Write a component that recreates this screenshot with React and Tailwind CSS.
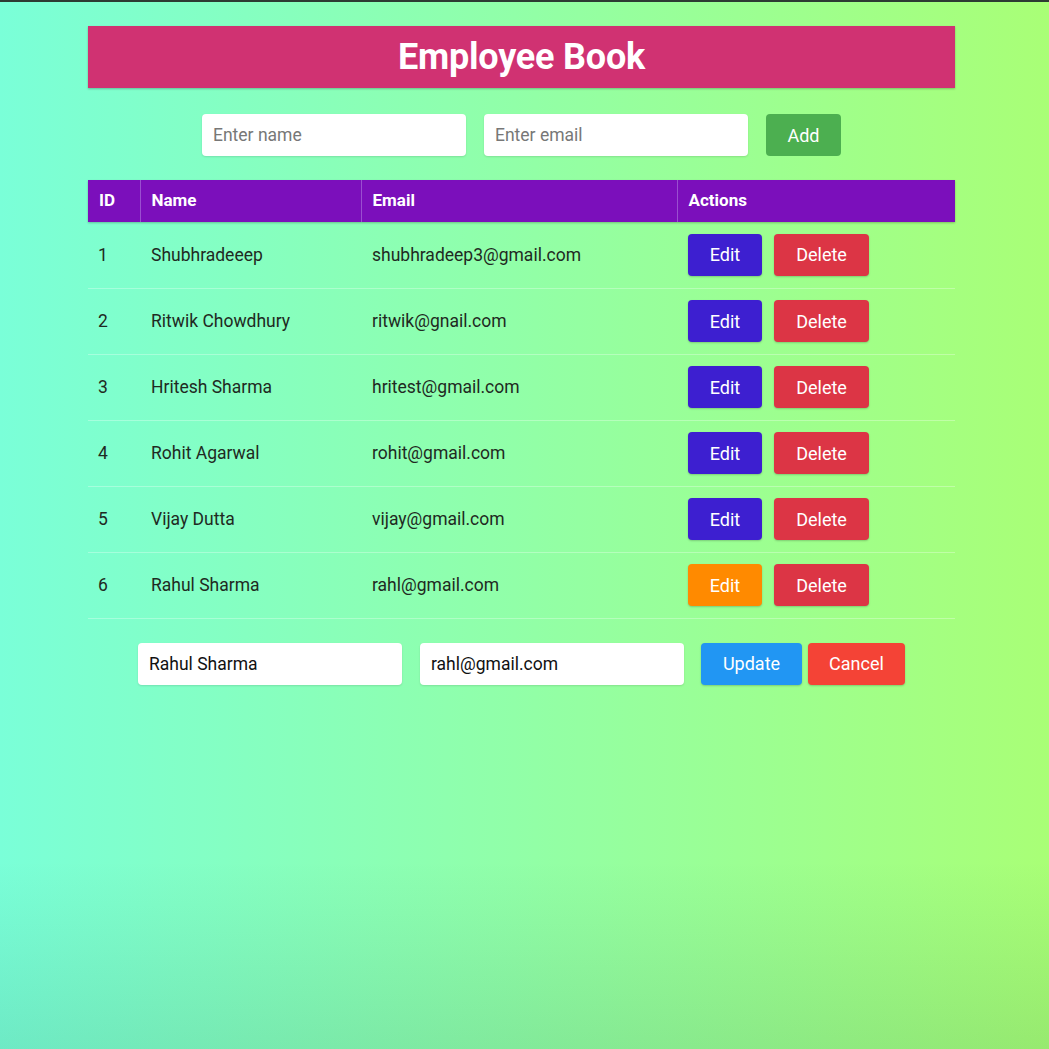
import { useState } from "react";

const initialEmployees = [
  { id: 1, name: "Shubhradeeep", email: "shubhradeep3@gmail.com" },
  { id: 2, name: "Ritwik Chowdhury", email: "ritwik@gnail.com" },
  { id: 3, name: "Hritesh Sharma", email: "hritest@gmail.com" },
  { id: 4, name: "Rohit Agarwal", email: "rohit@gmail.com" },
  { id: 5, name: "Vijay Dutta", email: "vijay@gmail.com" },
  { id: 6, name: "Rahul Sharma", email: "rahl@gmail.com" },
];

export default function App() {
  const [employees, setEmployees] = useState(initialEmployees);
  const [name, setName] = useState("");
  const [email, setEmail] = useState("");
  const [editingId, setEditingId] = useState(6);
  const [editName, setEditName] = useState("Rahul Sharma");
  const [editEmail, setEditEmail] = useState("rahl@gmail.com");

  const handleAdd = () => {
    if (!name || !email) return;
    const nextId = employees.length ? employees[employees.length - 1].id + 1 : 1;
    setEmployees([...employees, { id: nextId, name, email }]);
    setName("");
    setEmail("");
  };

  const startEdit = (emp) => {
    setEditingId(emp.id);
    setEditName(emp.name);
    setEditEmail(emp.email);
  };

  const handleUpdate = () => {
    setEmployees(
      employees.map((e) =>
        e.id === editingId ? { ...e, name: editName, email: editEmail } : e,
      ),
    );
    setEditingId(null);
  };

  return (
    <div className="min-h-[1049px] border-t-2 border-[#2d3b33] bg-[linear-gradient(to_bottom,transparent_82%,rgba(20,80,60,0.12)),linear-gradient(to_right,#7affd8,#a9ff76)] font-['Roboto',sans-serif]">
      <div className="w-[867px] ml-[88px] pt-[24px]">
        <div className="h-[62px] bg-[#d03272] flex items-center justify-center shadow-[0_1px_2px_rgba(0,0,0,0.25)]">
          <h1 className="text-[36px] font-bold text-white tracking-[-0.2px]">
            Employee Book
          </h1>
        </div>

        <div className="flex justify-center items-center gap-[18px] mt-[26px]">
          <input
            value={name}
            onChange={(e) => setName(e.target.value)}
            placeholder="Enter name"
            className="w-[264px] h-[42px] bg-white rounded-[4px] px-[11px] text-[17.5px] text-[#222] placeholder:text-[#777] outline-none shadow-[0_1px_2px_rgba(0,0,0,0.12)]"
          />
          <input
            value={email}
            onChange={(e) => setEmail(e.target.value)}
            placeholder="Enter email"
            className="w-[264px] h-[42px] bg-white rounded-[4px] px-[11px] text-[17.5px] text-[#222] placeholder:text-[#777] outline-none shadow-[0_1px_2px_rgba(0,0,0,0.12)]"
          />
          <button
            onClick={handleAdd}
            className="w-[75px] h-[42px] bg-[#4caf50] text-white text-[18px] rounded-[4px]"
          >
            Add
          </button>
        </div>

        <table className="w-full mt-[24px] border-collapse text-left">
          <thead>
            <tr className="bg-[#7b0fbb] text-white h-[42px] shadow-[0_1px_2px_rgba(0,0,0,0.25)]">
              <th className="w-[52px] px-[11px] text-[17px] font-bold border-r border-[#9a4fd0]">ID</th>
              <th className="w-[221px] px-[11px] text-[17px] font-bold border-r border-[#9a4fd0]">Name</th>
              <th className="w-[316px] px-[11px] text-[17px] font-bold border-r border-[#9a4fd0]">Email</th>
              <th className="px-[11px] text-[17px] font-bold">Actions</th>
            </tr>
          </thead>
          <tbody>
            {employees.map((emp) => (
              <tr key={emp.id} className="h-[66px] border-b border-white/30 text-[#1f2a22] text-[17.5px]">
                <td className="px-[10px]">{emp.id}</td>
                <td className="px-[11px]">{emp.name}</td>
                <td className="px-[11px]">{emp.email}</td>
                <td className="px-[11px]">
                  <div className="flex gap-[12px]">
                    <button
                      onClick={() => startEdit(emp)}
                      className={`w-[74px] h-[42px] rounded-[4px] text-white text-[18px] shadow-[0_1px_2px_rgba(0,0,0,0.2)] ${
                        editingId === emp.id ? "bg-[#ff8a00]" : "bg-[#3d1fd0]"
                      }`}
                    >
                      Edit
                    </button>
                    <button
                      onClick={() => setEmployees(employees.filter((e) => e.id !== emp.id))}
                      className="w-[95px] h-[42px] rounded-[4px] bg-[#dc3545] text-white text-[18px] shadow-[0_1px_2px_rgba(0,0,0,0.2)]"
                    >
                      Delete
                    </button>
                  </div>
                </td>
              </tr>
            ))}
          </tbody>
        </table>

        {editingId !== null && (
          <div className="flex justify-center items-center mt-[24px]">
            <input
              value={editName}
              onChange={(e) => setEditName(e.target.value)}
              className="w-[264px] h-[42px] bg-white rounded-[4px] px-[11px] text-[17.5px] text-[#111] outline-none shadow-[0_1px_2px_rgba(0,0,0,0.12)]"
            />
            <input
              value={editEmail}
              onChange={(e) => setEditEmail(e.target.value)}
              className="ml-[18px] w-[264px] h-[42px] bg-white rounded-[4px] px-[11px] text-[17.5px] text-[#111] outline-none shadow-[0_1px_2px_rgba(0,0,0,0.12)]"
            />
            <button
              onClick={handleUpdate}
              className="ml-[17px] w-[101px] h-[42px] bg-[#2196f3] text-white text-[18px] rounded-[4px] shadow-[0_1px_2px_rgba(0,0,0,0.2)]"
            >
              Update
            </button>
            <button
              onClick={() => setEditingId(null)}
              className="ml-[6px] w-[97px] h-[42px] bg-[#f44336] text-white text-[18px] rounded-[4px] shadow-[0_1px_2px_rgba(0,0,0,0.2)]"
            >
              Cancel
            </button>
          </div>
        )}
      </div>
    </div>
  );
}
